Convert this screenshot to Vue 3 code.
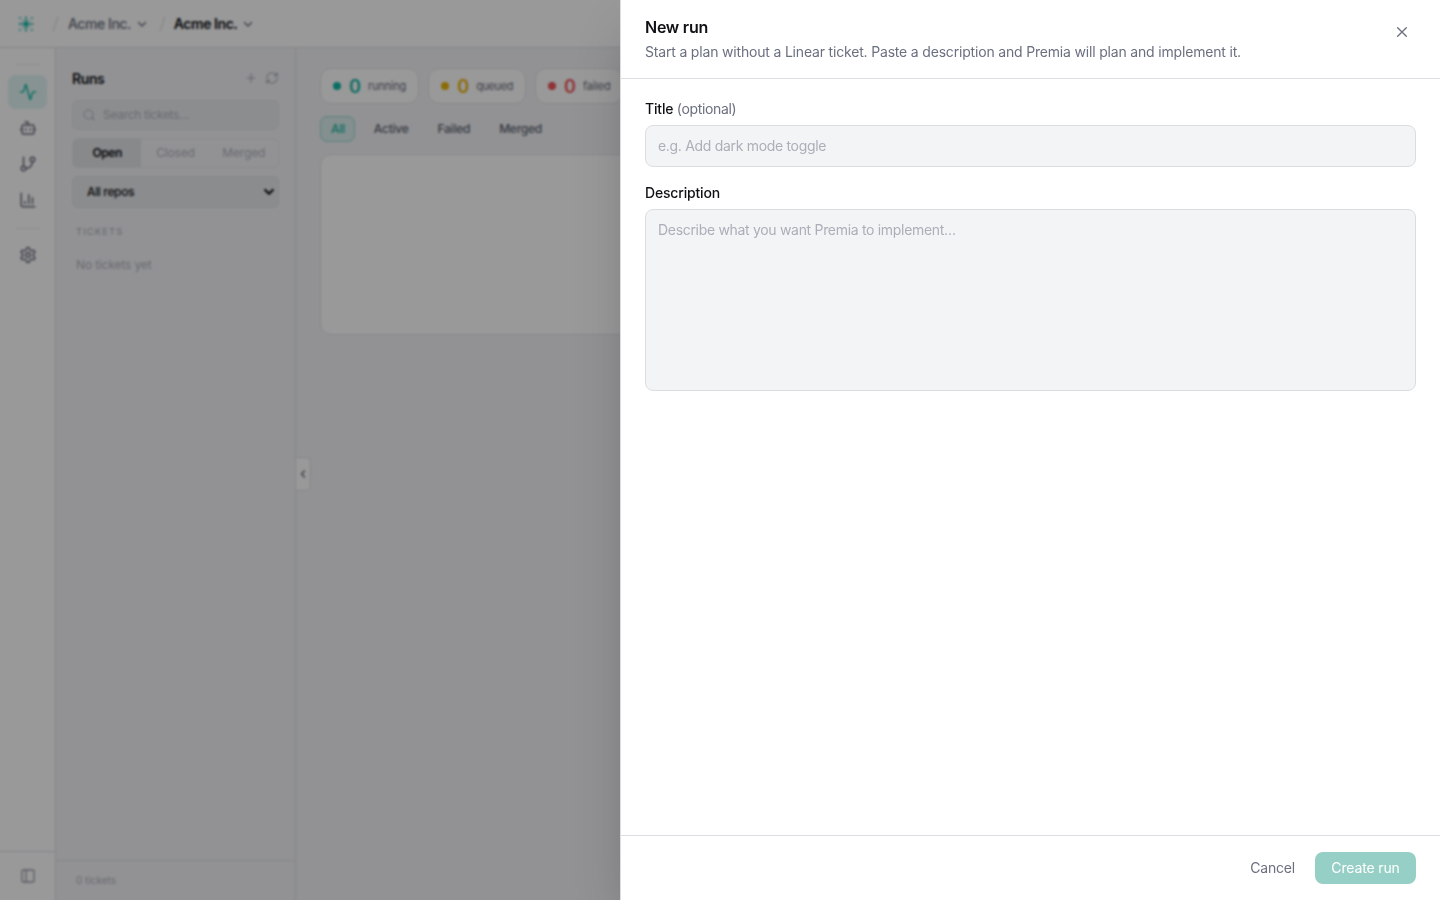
<template>
  <div class="app">
    <header class="topbar">
      <svg class="logo" width="16" height="16" viewBox="0 0 16 16">
        <circle v-for="d in logoDots" :key="d.x + '-' + d.y" :cx="d.x" :cy="d.y" :r="d.r" :opacity="d.o" fill="#14b8a6" />
      </svg>
      <span class="slash"></span>
      <button class="crumb org">Acme Inc.
        <svg class="icon" width="12" height="12" viewBox="0 0 24 24" stroke-width="2.8"><path d="m5 9 7 7 7-7" /></svg>
      </button>
      <span class="slash second"></span>
      <button class="crumb project">Acme Inc.
        <svg class="icon" width="12" height="12" viewBox="0 0 24 24" stroke-width="2.8"><path d="m5 9 7 7 7-7" /></svg>
      </button>
    </header>

    <div class="body">
      <nav class="rail">
        <span class="rule"></span>
        <a v-for="item in navItems" :key="item.name" class="railItem" :class="{ active: item.name === page }" @click="page = item.name">
          <svg class="icon" width="18" height="18" viewBox="0 0 24 24" stroke-width="2">
            <path v-for="p in item.paths" :key="p" :d="p" />
          </svg>
        </a>
        <span class="rule lower"></span>
        <a class="railItem">
          <svg class="icon" width="18" height="18" viewBox="0 0 24 24" stroke-width="2">
            <path d="M12.22 2h-.44a2 2 0 0 0-2 2v.18a2 2 0 0 1-1 1.73l-.43.25a2 2 0 0 1-2 0l-.15-.08a2 2 0 0 0-2.73.73l-.22.38a2 2 0 0 0 .73 2.73l.15.1a2 2 0 0 1 1 1.72v.51a2 2 0 0 1-1 1.74l-.15.09a2 2 0 0 0-.73 2.73l.22.38a2 2 0 0 0 2.73.73l.15-.08a2 2 0 0 1 2 0l.43.25a2 2 0 0 1 1 1.73V20a2 2 0 0 0 2 2h.44a2 2 0 0 0 2-2v-.18a2 2 0 0 1 1-1.73l.43-.25a2 2 0 0 1 2 0l.15.08a2 2 0 0 0 2.73-.73l.22-.39a2 2 0 0 0-.73-2.73l-.15-.08a2 2 0 0 1-1-1.74v-.5a2 2 0 0 1 1-1.74l.15-.09a2 2 0 0 0 .73-2.73l-.22-.38a2 2 0 0 0-2.73-.73l-.15.08a2 2 0 0 1-2 0l-.43-.25a2 2 0 0 1-1-1.73V4a2 2 0 0 0-2-2z" />
            <circle cx="12" cy="12" r="3" />
          </svg>
        </a>
        <div class="railFooter">
          <svg class="icon" width="16" height="16" viewBox="0 0 24 24" stroke-width="2"><rect x="3" y="3" width="18" height="18" rx="2" /><path d="M9 3v18" /></svg>
        </div>
      </nav>

      <aside class="sidebar">
        <div class="sideHead">
          <h2>Runs</h2>
          <svg class="icon" width="14" height="14" viewBox="0 0 24 24" stroke-width="2"><path d="M5 12h14M12 5v14" /></svg>
          <svg class="icon" width="14" height="14" viewBox="0 0 24 24" stroke-width="2"><path d="M3 12a9 9 0 0 1 9-9 9.75 9.75 0 0 1 6.74 2.74L21 8M21 3v5h-5M21 12a9 9 0 0 1-9 9 9.75 9.75 0 0 1-6.74-2.74L3 16M8 16H3v5" /></svg>
        </div>
        <div class="search">
          <svg class="icon" width="12" height="12" viewBox="0 0 24 24" stroke-width="2.2"><circle cx="11" cy="11" r="9" /><path d="m22 22-4.3-4.3" /></svg>
          <span>Search tickets…</span>
        </div>
        <div class="tabs">
          <button v-for="t in tabs" :key="t" :class="{ on: t === tab }" @click="tab = t">{{ t }}</button>
        </div>
        <div class="repos">
          <span>All repos</span>
          <svg class="icon" width="10" height="10" viewBox="0 0 10 10" stroke-width="2.2"><path d="m1.2 3 3.8 3.8L8.8 3" /></svg>
        </div>
        <h3>TICKETS</h3>
        <p class="none">No tickets yet</p>
        <div class="sideFooter">0 tickets</div>
      </aside>

      <main class="content">
        <button class="collapse">
          <svg class="icon" width="12" height="12" viewBox="0 0 24 24" stroke-width="3"><path d="m15 18-6-6 6-6" /></svg>
        </button>
        <div class="stats">
          <div v-for="s in stats" :key="s.label" class="stat" :class="s.label">
            <i></i><b>0</b><span>{{ s.label }}</span>
          </div>
        </div>
        <div class="filters">
          <button v-for="f in filters" :key="f" :class="{ on: f === filter }" @click="filter = f">{{ f }}</button>
        </div>
        <div class="card"></div>
      </main>
    </div>

    <div class="overlay"></div>

    <section class="drawer">
      <header class="drawerHead">
        <div>
          <h1>New run</h1>
          <p>Start a plan without a Linear ticket. Paste a description and Premia will plan and implement it.</p>
        </div>
        <button class="close">
          <svg class="icon" width="16" height="16" viewBox="0 0 24 24" stroke-width="2"><path d="M18.5 5.5l-13 13M5.5 5.5l13 13" /></svg>
        </button>
      </header>
      <div class="form">
        <label for="title">Title <em>(optional)</em></label>
        <input id="title" v-model="title" placeholder="e.g. Add dark mode toggle">
        <label for="description" class="descLabel">Description</label>
        <textarea id="description" v-model="description" placeholder="Describe what you want Premia to implement…"></textarea>
      </div>
      <footer class="drawerFoot">
        <button class="cancel">Cancel</button>
        <button class="create" :disabled="!description">Create run</button>
      </footer>
    </section>
  </div>
</template>

<script setup>
import { ref } from 'vue';

const page = ref('runs');
const tab = ref('Open');
const filter = ref('All');
const title = ref('');
const description = ref('');

const tabs = ['Open', 'Closed', 'Merged'];
const filters = ['All', 'Active', 'Failed', 'Merged'];
const stats = [{ label: 'running' }, { label: 'queued' }, { label: 'failed' }];

const navItems = [
  { name: 'runs', paths: ['M22 12h-2.48a2 2 0 0 0-1.93 1.46l-2.35 8.36a.25.25 0 0 1-.48 0L9.24 2.18a.25.25 0 0 0-.48 0l-2.35 8.36A2 2 0 0 1 4.49 12H2'] },
  { name: 'agents', paths: ['M12 8V4H8', 'M6 8h12a2 2 0 0 1 2 2v8a2 2 0 0 1-2 2H6a2 2 0 0 1-2-2v-8a2 2 0 0 1 2-2z', 'M2 14h2', 'M20 14h2', 'M15 13v2', 'M9 13v2'] },
  { name: 'repos', paths: ['M6 3v12', 'M21 6a3 3 0 1 1-6 0 3 3 0 0 1 6 0z', 'M9 18a3 3 0 1 1-6 0 3 3 0 0 1 6 0z', 'M18 9a9 9 0 0 1-9 9'] },
  { name: 'usage', paths: ['M3 3v16a2 2 0 0 0 2 2h16', 'M8 17v-3', 'M13 17V5', 'M18 17V9'] },
];

// dots form a plus, the corners are fainter
const logoDots = [
  { x: 8, y: 8, r: 2.2, o: 1 },
  { x: 8, y: 4.8, r: 1.3, o: 0.9 }, { x: 8, y: 11.2, r: 1.3, o: 0.9 },
  { x: 4.8, y: 8, r: 1.3, o: 0.9 }, { x: 11.2, y: 8, r: 1.3, o: 0.9 },
  { x: 8, y: 1.8, r: 1.2, o: 0.8 }, { x: 8, y: 14.2, r: 1.2, o: 0.8 },
  { x: 1.8, y: 8, r: 1.2, o: 0.8 }, { x: 14.2, y: 8, r: 1.2, o: 0.8 },
  { x: 4.8, y: 4.8, r: 1, o: 0.5 }, { x: 11.2, y: 4.8, r: 1, o: 0.5 },
  { x: 4.8, y: 11.2, r: 1, o: 0.5 }, { x: 11.2, y: 11.2, r: 1, o: 0.5 },
  { x: 2, y: 2, r: 1.2, o: 0.6 }, { x: 14, y: 2, r: 1.2, o: 0.6 },
  { x: 2, y: 14, r: 1.2, o: 0.6 }, { x: 14, y: 14, r: 1.2, o: 0.6 },
];
</script>

<style>
body {
  margin: 0;
  overflow: hidden;
}
</style>

<style scoped>
* {
  box-sizing: border-box;
}

.app {
  position: relative;
  width: 100vw;
  height: 100vh;
  overflow: hidden;
  display: flex;
  flex-direction: column;
  background: #f3f4f7;
  color: #0f1115;
  font-family: Inter, "Liberation Sans", sans-serif;
  font-size: 14px;
}

button {
  border: 0;
  padding: 0;
  background: none;
  font: inherit;
  color: inherit;
}

h1, h2, h3, p {
  margin: 0;
}

.icon {
  display: block;
  flex: none;
  fill: none;
  stroke: currentColor;
  stroke-linecap: round;
  stroke-linejoin: round;
}

/* top bar */
.topbar {
  height: 48px;
  flex: none;
  display: flex;
  align-items: center;
  padding-left: 18px;
  background: #fff;
  border-bottom: 1px solid #dcdfe4;
}

.logo {
  margin-right: 21px;
}

.slash {
  width: 1px;
  height: 16px;
  background: #d8dbe0;
  transform: rotate(18deg);
  margin-right: 12px;
}

.slash.second {
  margin-left: 14px;
  margin-right: 11px;
}

.crumb {
  display: flex;
  align-items: center;
  gap: 5px;
  font-weight: 500;
  letter-spacing: -0.45px;
}

.crumb.org {
  color: #6b7080;
}

.crumb.project {
  font-weight: 600;
}

.crumb .icon {
  color: #6b7080;
}

.body {
  flex: 1;
  min-height: 0;
  display: flex;
}

/* icon rail */
.rail {
  width: 56px;
  flex: none;
  display: flex;
  flex-direction: column;
  align-items: center;
  padding-top: 16px;
  background: #fff;
  border-right: 1px solid #dcdfe4;
}

.rule {
  width: 24px;
  height: 1px;
  background: #e8eaed;
  margin-bottom: 10px;
}

.rule.lower {
  margin: 9px 0 9px;
}

.railItem {
  width: 39px;
  height: 34px;
  margin-bottom: 2px;
  border-radius: 8px;
  display: flex;
  align-items: center;
  justify-content: center;
  color: #6b7080;
}

.railItem.active {
  background: #e1f5f3;
  color: #14b8a6;
}

.railFooter {
  margin-top: auto;
  align-self: stretch;
  height: 49px;
  border-top: 1px solid #dcdfe4;
  display: flex;
  align-items: center;
  justify-content: center;
  color: #9a9eaa;
}

/* ticket list */
.sidebar {
  width: 240px;
  flex: none;
  display: flex;
  flex-direction: column;
  padding: 0 16px;
  border-right: 1px solid #dcdfe4;
}

.sideHead {
  display: flex;
  align-items: center;
  gap: 7px;
  height: 20px;
  margin: 20px 0 12px;
  color: #a8acb6;
}

.sideHead h2 {
  flex: 1;
  font-size: 14px;
  font-weight: 600;
  letter-spacing: -0.4px;
  color: #0f1115;
}

.search {
  height: 30px;
  display: flex;
  align-items: center;
  gap: 8px;
  padding: 0 10px;
  background: #eaecef;
  border: 1px solid #e1e4e8;
  border-radius: 6px;
  font-size: 12px;
  letter-spacing: -0.3px;
  color: #b1b5be;
}

.search span {
  margin-top: -1px;
}

.tabs {
  height: 30px;
  margin-top: 8px;
  display: flex;
  border: 1px solid #e8eaee;
  border-radius: 6px;
  overflow: hidden;
}

.tabs button {
  flex: 1;
  padding-bottom: 1px;
  font-size: 12px;
  letter-spacing: -0.15px;
  color: #b1b5be;
}

.tabs button.on {
  background: #e2e4e7;
  font-weight: 600;
  letter-spacing: -0.45px;
  color: #0f1115;
}

.repos {
  height: 32px;
  margin-top: 8px;
  display: flex;
  align-items: center;
  justify-content: space-between;
  padding: 0 4px 1px 14px;
  background: #e7e9ec;
  border: 1px solid #e1e4e8;
  border-radius: 6px;
  font-size: 12px;
  font-weight: 500;
  letter-spacing: -0.35px;
}

.sidebar h3 {
  margin: 17px 4px 0;
  font-size: 9.5px;
  font-weight: 400;
  line-height: 13px;
  letter-spacing: 1.05px;
  color: #a8acb6;
}

.none {
  margin: 19px 4px 0;
  font-size: 12px;
  line-height: 16px;
  letter-spacing: -0.15px;
  color: #b1b5be;
}

.sideFooter {
  margin: auto -16px 0;
  height: 40px;
  padding-left: 20px;
  line-height: 39px;
  border-top: 1px solid #dcdfe4;
  font-size: 10px;
  color: #b1b5be;
}

/* main column */
.content {
  position: relative;
  flex: 1;
  min-width: 0;
  padding: 20px 24px;
}

.collapse {
  position: absolute;
  left: 0;
  top: 409px;
  width: 15px;
  height: 34px;
  display: flex;
  align-items: center;
  justify-content: center;
  background: #fff;
  border: 1px solid #dcdfe4;
  border-left: 0;
  border-radius: 0 5px 5px 0;
  color: #6b7080;
}

.stats {
  display: flex;
  gap: 9px;
}

.stat {
  height: 36px;
  display: flex;
  align-items: center;
  padding: 0 12px;
  background: #fff;
  border: 1px solid #e2e4e8;
  border-radius: 11px;
}

.stat i {
  width: 8px;
  height: 8px;
  border-radius: 50%;
  background: currentColor;
  margin-right: 8px;
}

.stat b {
  width: 11px;
  font-size: 18px;
  font-weight: 600;
  margin-right: 8px;
}

.stat span {
  font-size: 11px;
  letter-spacing: -0.2px;
  color: #6b7080;
}

.running {
  color: #14b8a6;
}

.queued {
  color: #eab308;
}

.queued span {
  letter-spacing: -0.4px;
}

.failed {
  color: #f0555a;
}

.filters {
  display: flex;
  gap: 8px;
  margin-top: 12px;
}

.filters button {
  height: 26px;
  padding: 0 9px 1px 10px;
  border: 1px solid transparent;
  border-radius: 7px;
  font-size: 12px;
  font-weight: 500;
  letter-spacing: -0.25px;
  color: #5b6070;
}

.filters button.on {
  background: #dcefee;
  border-color: #97d8d0;
  color: #14b8a6;
}

.card {
  height: 181px;
  margin-top: 12px;
  background: #fff;
  border: 1px solid #e2e4e8;
  border-radius: 11px;
}

.overlay {
  position: absolute;
  inset: 0;
  background: rgba(0, 0, 0, 0.4);
  backdrop-filter: blur(1.2px);
}

/* new run drawer */
.drawer {
  position: absolute;
  top: 0;
  right: 0;
  bottom: 0;
  width: 820px;
  display: flex;
  flex-direction: column;
  background: #fff;
  border-left: 1px solid #dadee3;
  box-shadow: 0 25px 50px -12px rgba(0, 0, 0, 0.25);
}

.drawerHead {
  height: 79px;
  flex: none;
  display: flex;
  justify-content: space-between;
  padding: 15px 24px 0;
  border-bottom: 1px solid #dadee3;
}

.drawerHead h1 {
  font-size: 16px;
  font-weight: 600;
  line-height: 24px;
  letter-spacing: -0.25px;
}

.drawerHead p {
  margin-top: 3px;
  line-height: 20px;
  letter-spacing: -0.18px;
  color: #6b7080;
}

.close {
  width: 28px;
  height: 34px;
  display: flex;
  align-items: center;
  justify-content: center;
  color: #6b7080;
}

.form {
  flex: 1;
  display: flex;
  flex-direction: column;
  padding: 20px 24px;
}

.form label {
  line-height: 20px;
  font-weight: 500;
  letter-spacing: -0.18px;
}

.form label em {
  font-style: normal;
  font-weight: 400;
  letter-spacing: -0.35px;
  color: #6b7080;
}

.form .descLabel {
  margin-top: 16px;
}

.form input,
.form textarea {
  display: block;
  width: 100%;
  margin: 6px 0 0;
  padding: 0 12px;
  background: #f3f4f6;
  border: 1px solid #dadee3;
  border-radius: 8px;
  outline: none;
  resize: none;
  font: inherit;
  letter-spacing: -0.31px;
  color: inherit;
}

.form input {
  height: 42px;
  padding-bottom: 1px;
}

.form textarea {
  height: 182px;
  padding-top: 10px;
  line-height: 20px;
}

.form ::placeholder {
  color: #abafb9;
  opacity: 1;
}

.drawerFoot {
  height: 65px;
  flex: none;
  display: flex;
  align-items: center;
  justify-content: flex-end;
  gap: 20px;
  padding: 0 24px;
  border-top: 1px solid #dadee3;
}

.cancel {
  padding-bottom: 1px;
  letter-spacing: -0.2px;
  color: #6b7080;
}

.create {
  width: 101px;
  height: 32px;
  padding-bottom: 1px;
  letter-spacing: -0.15px;
  border-radius: 8px;
  background: #0d9f8a;
  color: #fff;
}

.create:disabled {
  background: #96cfc5;
}
</style>
